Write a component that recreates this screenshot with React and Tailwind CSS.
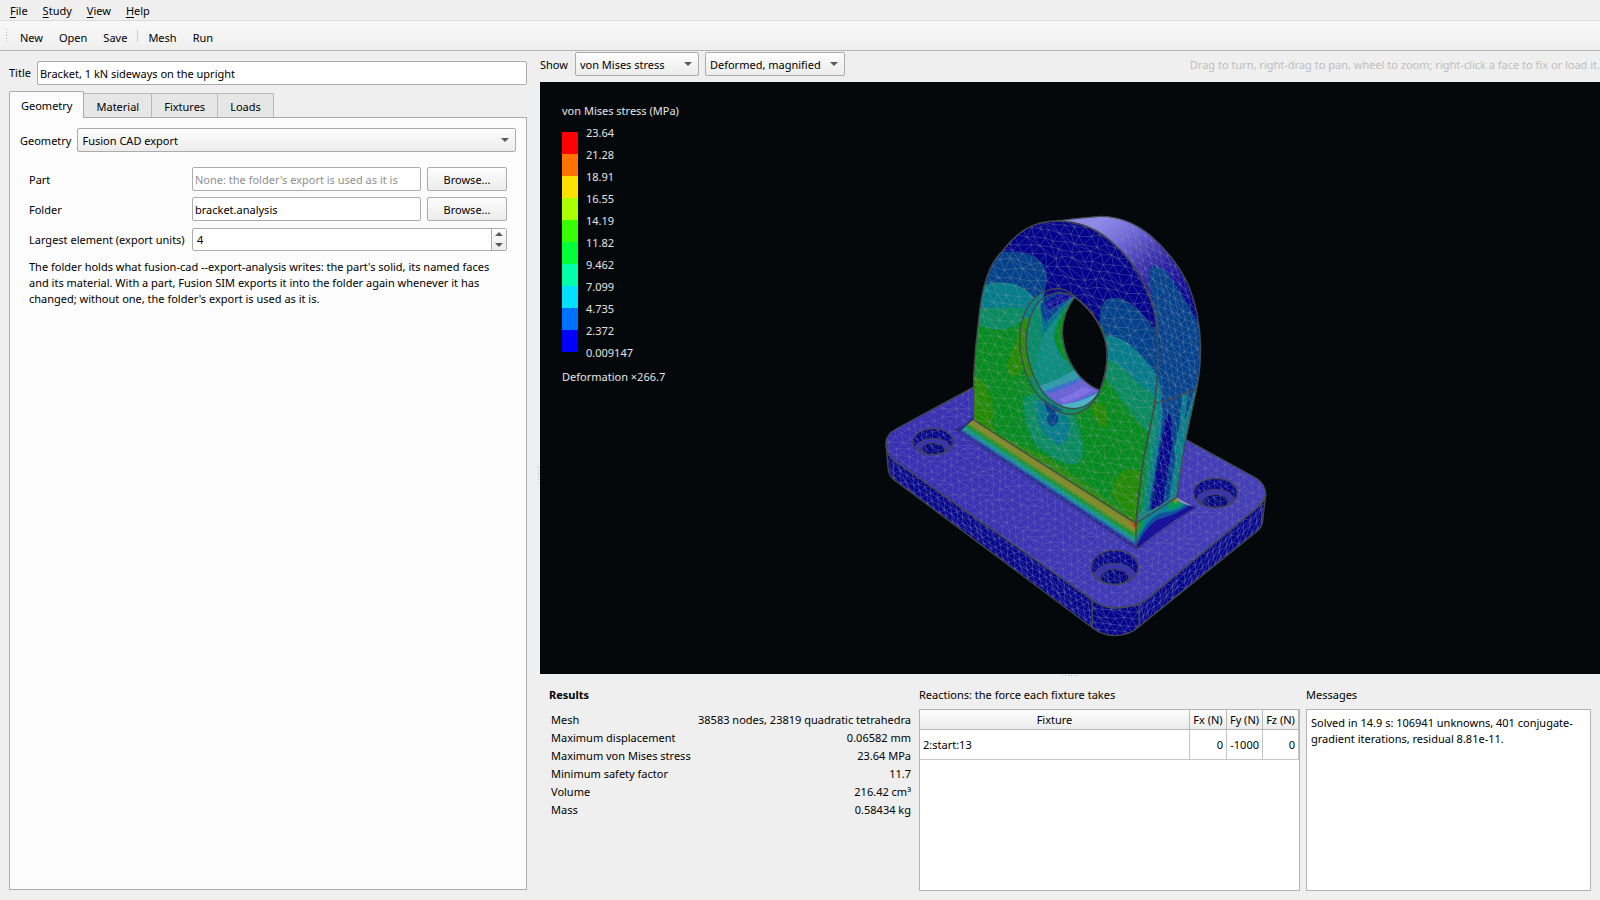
import React from 'react';

const menus = ['File', 'Study', 'View', 'Help'];

const results = [
  ['Mesh', '38583 nodes, 23819 quadratic tetrahedra'],
  ['Maximum displacement', '0.06582 mm'],
  ['Maximum von Mises stress', '23.64 MPa'],
  ['Minimum safety factor', '11.7'],
  ['Volume', '216.42 cm³'],
  ['Mass', '0.58434 kg'],
];

const legend = [
  { value: '23.64', color: 'bg-[#ff0000]' },
  { value: '21.28', color: 'bg-[#ff7300]' },
  { value: '18.91', color: 'bg-[#ffe100]' },
  { value: '16.55', color: 'bg-[#aaff00]' },
  { value: '14.19', color: 'bg-[#38ff00]' },
  { value: '11.82', color: 'bg-[#00ff38]' },
  { value: '9.462', color: 'bg-[#00ffaa]' },
  { value: '7.099', color: 'bg-[#00e1ff]' },
  { value: '4.735', color: 'bg-[#0071ff]' },
  { value: '2.372', color: 'bg-[#0000ff]' },
];

const field = 'h-6 min-w-0 rounded-xs border border-[#ababab] bg-white px-[2px] outline-none';
const raised = 'rounded-xs border border-[#ababab] bg-linear-to-b from-[#fdfdfd] to-[#ececec] pt-px';

const Arrow = ({ up = false, className = 'h-1 w-2' }) => (
  <svg viewBox="0 0 8 4" className={className} aria-hidden="true">
    <path d={up ? 'M0 4L4 0L8 4Z' : 'M0 0L8 0L4 4Z'} fill="#5a5a5a" />
  </svg>
);

const Select = ({ id, label, options, className }) => (
  <div className={`relative ${className}`}>
    <select
      id={id}
      aria-label={label}
      className={`h-6 w-full appearance-none pr-5 pl-1 outline-none ${raised}`}
    >
      {options.map((o) => (
        <option key={o}>{o}</option>
      ))}
    </select>
    <Arrow className="pointer-events-none absolute top-2.5 right-[7px] h-1 w-2" />
  </div>
);

// Small pseudo random offset that stays the same for a given lattice point
const noise = (i, j, k) => {
  const s = Math.sin(i * 127.1 + j * 311.7 + k * 74.7) * 43758.5453;
  return s - Math.floor(s) - 0.5;
};

// Triangle lattice over a box, spanned by the vectors u and v
const meshPath = ([x0, y0, x1, y1], u, v, jitter) => {
  const det = u[0] * v[1] - u[1] * v[0];
  const cx = (x0 + x1) / 2;
  const cy = (y0 + y1) / 2;
  const reach = Math.hypot(x1 - x0, y1 - y0) / 2;
  const nu = Math.ceil((reach * Math.hypot(v[0], v[1])) / Math.abs(det)) + 1;
  const nv = Math.ceil((reach * Math.hypot(u[0], u[1])) / Math.abs(det)) + 1;
  const point = (i, j) => [
    Math.round(cx + i * u[0] + j * v[0] + noise(i, j, 1) * jitter),
    Math.round(cy + i * u[1] + j * v[1] + noise(i, j, 2) * jitter),
  ];
  let d = '';
  for (let i = -nu; i <= nu; i++) {
    for (let j = -nv; j <= nv; j++) {
      const [px, py] = point(i, j);
      if (px < x0 - 40 || px > x1 + 40 || py < y0 - 40 || py > y1 + 40) continue;
      const a = point(i + 1, j);
      const b = point(i, j + 1);
      // flip some diagonals so the mesh doesn't look regular
      const flip = noise(i, j, 3) > 0.28;
      const c = point(i + 1, j + 1);
      d += `M${a}L${px} ${py}L${b}`;
      d += flip ? `M${px} ${py}L${c}` : `M${a}L${b}`;
    }
  }
  return d;
};

const shapes = {
  baseTop:
    'M78 762Q76 735 108 717L340 592L980 750L1188 864Q1219 884 1217 918Q1212 935 1195 950L868 1222Q840 1252 765 1254Q725 1252 697 1230L100 810Q80 792 78 762Z',
  baseLeft: 'M78 762Q80 792 100 810L697 1230V1313L106 872Q84 858 84 830Z',
  baseCorner: 'M697 1230Q725 1252 765 1254Q810 1252 838 1240V1309Q810 1336 765 1337Q725 1335 697 1313Z',
  baseRight: 'M838 1240Q858 1232 868 1222L1195 950Q1212 935 1217 915L1207 1000Q1204 1012 1192 1023L838 1309Z',
  foot: 'M341 688L828 1000L830 1076L560 898L300 724Z',
  front:
    'M341 690L341 560Q345 470 357 380Q362 330 372 290Q388 220 430 180Q495 93 590 93Q690 93 765 165Q850 245 880 355Q893 400 893 480L893 540Q890 610 880 665L852 800Q836 900 828 1000Z',
  side:
    'M590 93Q650 84 720 79Q800 78 870 135Q945 200 985 285Q1020 370 1022 470Q1022 540 1010 595Q990 690 977 750Q960 850 950 922L828 1000Q836 900 852 800L880 665Q890 610 893 540L893 480Q893 400 880 355Q850 245 765 165Q690 93 590 93Z',
  ring:
    'M645 320Q620 296 590 295Q540 300 510 340Q478 385 479 455Q484 545 530 610Q575 670 632 673Q690 668 720 600Q742 545 742 490Q735 390 645 320Z',
  bore:
    'M640 318Q620 308 595 308Q550 312 525 350Q498 400 498 460Q504 545 550 608Q590 656 645 656Q695 650 720 600Q742 545 742 490Q735 390 640 318Z',
  opening:
    'M645 320Q607 370 607 430Q612 505 662 562Q692 592 720 601Q742 550 742 490Q735 390 645 320Z',
};

const meshes = {
  top: meshPath([70, 580, 1220, 1260], [21, 14], [20, -13], 9),
  left: meshPath([70, 750, 700, 1320], [19, 14], [3, 21], 6),
  corner: meshPath([690, 1225, 845, 1340], [26, 2], [12, 22], 6),
  right: meshPath([830, 900, 1220, 1320], [18, -15], [2, 20], 6),
  front: meshPath([335, 90, 895, 1000], [30, 4], [14, 28], 14),
  side: meshPath([590, 75, 1025, 1000], [20, 10], [5, 26], 9),
  foot: meshPath([295, 685, 1010, 1085], [17, 11], [2, 13], 5),
  bore: meshPath([475, 290, 745, 675], [24, 10], [8, 28], 8),
};

const holes = [
  { cx: 219, cy: 755, rx: 61, ry: 39 },
  { cx: 1066, cy: 909, rx: 66, ry: 44 },
  { cx: 764, cy: 1132, rx: 71, ry: 51 },
];

const CounterBore = ({ cx, cy, rx, ry, id }) => (
  <g>
    <clipPath id={id}>
      <ellipse cx={cx} cy={cy} rx={rx} ry={ry} />
    </clipPath>
    <clipPath id={`${id}-floor`}>
      <ellipse cx={cx} cy={cy + ry * 0.58} rx={rx * 0.6} ry={ry * 0.48} />
    </clipPath>
    <g clipPath={`url(#${id})`}>
      <rect x={cx - rx} y={cy - ry} width={rx * 2} height={ry * 2} fill="#02028a" />
      <path d={meshes.left} stroke="#6e78b4" strokeOpacity="0.6" transform={`translate(${cx - 380} ${cy - 1020})`} />
      <ellipse cx={cx} cy={cy + ry * 0.66} rx={rx * 0.92} ry={ry * 0.9} fill="#3a34ae" stroke="#45474f" strokeWidth="3" />
      <g clipPath={`url(#${id}-floor)`}>
        <rect x={cx - rx} y={cy - ry} width={rx * 2} height={ry * 2.2} fill="#02027c" />
        <path d={meshes.left} stroke="#6e78b4" strokeOpacity="0.6" transform={`translate(${cx - 384} ${cy - 1000})`} />
      </g>
      <ellipse cx={cx} cy={cy + ry * 0.58} rx={rx * 0.6} ry={ry * 0.48} stroke="#45474f" strokeWidth="3" />
    </g>
    <ellipse cx={cx} cy={cy} rx={rx} ry={ry} stroke="#45474f" strokeWidth="4" />
  </g>
);

const StressModel = () => (
  <svg
    viewBox="-960 -324 3180 1776"
    className="absolute inset-0 h-full w-full"
    role="img"
    aria-label="Bracket coloured by von Mises stress"
    fill="none"
    strokeWidth="2"
  >
    <defs>
      {Object.entries(shapes).map(([name, d]) => (
        <clipPath key={name} id={`clip-${name}`}>
          <path d={d} />
        </clipPath>
      ))}
      <linearGradient id="rim" gradientUnits="userSpaceOnUse" x1="740" y1="80" x2="960" y2="370">
        <stop offset="0" stopColor="#8f88ee" />
        <stop offset="0.22" stopColor="#7169de" />
        <stop offset="0.5" stopColor="#3a2fae" />
        <stop offset="0.8" stopColor="#140c9a" />
        <stop offset="1" stopColor="#02028c" />
      </linearGradient>
      <linearGradient id="plate" gradientUnits="userSpaceOnUse" x1="100" y1="800" x2="1150" y2="900">
        <stop offset="0" stopColor="#372eb4" />
        <stop offset="1" stopColor="#433db9" />
      </linearGradient>
      {/* Stress falls off across the fillet, from the upright outwards */}
      <linearGradient id="fillet" gradientUnits="userSpaceOnUse" x1="584" y1="845" x2="552" y2="894">
        <stop offset="0" stopColor="#5f8a10" />
        <stop offset="0.1" stopColor="#828a1c" />
        <stop offset="0.3" stopColor="#868c22" />
        <stop offset="0.38" stopColor="#4b931b" />
        <stop offset="0.5" stopColor="#14932a" />
        <stop offset="0.58" stopColor="#0b9a6c" />
        <stop offset="0.68" stopColor="#0b9a80" />
        <stop offset="0.74" stopColor="#148ba8" />
        <stop offset="0.84" stopColor="#1c56a8" />
        <stop offset="0.94" stopColor="#1d1d9a" />
        <stop offset="1" stopColor="#20189c" />
      </linearGradient>
      <linearGradient id="strips" gradientUnits="userSpaceOnUse" x1="848" y1="800" x2="974" y2="820">
        <stop offset="0" stopColor="#058c2a" />
        <stop offset="0.1" stopColor="#078b5f" />
        <stop offset="0.2" stopColor="#078b6e" />
        <stop offset="0.24" stopColor="#047c8b" />
        <stop offset="0.32" stopColor="#047c8b" />
        <stop offset="0.35" stopColor="#03418c" />
        <stop offset="0.44" stopColor="#03418c" />
        <stop offset="0.47" stopColor="#02028c" />
        <stop offset="0.62" stopColor="#02028c" />
        <stop offset="0.65" stopColor="#03418c" />
        <stop offset="0.75" stopColor="#03418c" />
        <stop offset="0.78" stopColor="#047c8b" />
        <stop offset="0.88" stopColor="#078b78" />
        <stop offset="1" stopColor="#0a8b4c" />
      </linearGradient>
    </defs>

    {/* Base plate */}
    <path d={shapes.baseTop} fill="url(#plate)" />
    <g clipPath="url(#clip-baseTop)">
      <path d={meshes.top} stroke="#8a90a8" strokeOpacity="0.4" />
    </g>
    {['Left', 'Corner', 'Right'].map((part) => (
      <g key={part} clipPath={`url(#clip-base${part})`}>
        <path d={shapes[`base${part}`]} fill="#02028a" />
        <path d={meshes[part.toLowerCase()]} stroke="#7a84b8" strokeOpacity="0.62" />
      </g>
    ))}
    <g stroke="#45474f" strokeWidth="4">
      <path d={shapes.baseTop} />
      <path d={shapes.baseLeft} />
      <path d={shapes.baseCorner} />
      <path d={shapes.baseRight} />
      <path d="M100 812V866M1205 940V1004" />
    </g>
    {holes.map((h, i) => (
      <CounterBore key={h.cx} id={`bore-${i}`} {...h} />
    ))}

    {/* Fillet round the foot */}
    <path d="M284 718Q325 708 341 672V700L308 730Z" fill="#2a239c" />
    <path d="M828 1000L950 922L1006 952Q920 1002 830 1076Z" fill="#18129a" />
    <path d="M828 1000L950 922L988 946Q950 974 890 990Q856 1014 830 1066Z" fill="#12509c" />
    <path d="M828 1000L950 922L976 944Q950 968 905 968Q860 985 830 1056Z" fill="#0b8296" />
    <path d="M925 940L950 922L970 940Q950 958 925 958Z" fill="#0b9a5a" />
    <path d="M938 930L950 922L958 932L946 942Z" fill="#7a9420" />
    <path d="M828 1000L862 980Q852 1010 829 1046Z" fill="#0a936c" />
    <path d="M828 1000L842 991Q844 1012 829 1034Z" fill="#2a931b" />
    <path d="M950 920L1006 950Q968 946 950 928Z" fill="#8d88d8" />
    <path d={shapes.foot} fill="url(#fillet)" />
    <g clipPath="url(#clip-foot)">
      <path d={meshes.foot} stroke="#8f98a4" strokeOpacity="0.3" />
    </g>
    <path d="M794 980L828 1002L832 1018L822 1014Z" fill="#a8701c" />
    <circle cx="827" cy="1004" r="6" fill="#b03a18" />
    <path d="M284 718Q325 708 341 672M284 718L560 898L830 1078L1008 952L950 920" stroke="#34366a" strokeWidth="3" />

    {/* Outer rim of the upright */}
    <path d={shapes.side} fill="url(#rim)" />
    <g clipPath="url(#clip-side)">
      <path
        d="M893 480Q893 400 880 340Q862 260 868 238Q884 214 920 245Q965 305 1010 392H1030V600L985 720L950 930L820 1010L870 690Z"
        fill="#03418c"
      />
      <path d="M868 640L905 610L908 740L1000 660L977 750L950 930L820 1010L852 800Z" fill="url(#strips)" />
      <path d="M893 555L905 605Q906 680 892 780L862 980L820 1010L852 800Z" fill="#047c8b" />
      <path d="M893 590Q900 680 876 800L855 985L820 1010L852 800Z" fill="#078b68" />
      <path d="M868 720Q862 840 842 990L826 1002L850 800Z" fill="#058b30" />
      <path d="M1015 560L1004 600Q972 690 958 790L935 935L955 925L1030 600Z" fill="#047c8b" />
      <path d="M1012 580Q984 690 968 790L944 930L960 925L1030 600Z" fill="#078b60" />
      <path d="M905 610L965 612Q970 700 945 770L930 740Q935 690 927 670L908 740Z" fill="#03418c" />
      <path d="M927 670Q938 690 934 740L900 955L872 970Q890 820 916 690Z" fill="#02028c" />
      <path d="M965 612L985 606Q975 700 948 800L940 780Q965 700 965 612Z" fill="#047c8b" />
      <path d="M828 1000L862 978L935 934L950 922L952 905Q900 952 866 962Q850 967 836 974Z" fill="#1a7e80" />
      <path d={meshes.side} stroke="#8f98ac" strokeOpacity="0.48" />
    </g>

    {/* Front face with its contour bands */}
    <path d={shapes.front} fill="#058b1e" />
    <g clipPath="url(#clip-front)">
      <path d="M330 555Q372 565 384 600Q408 650 396 700L420 745L330 700Z" fill="#238b03" />
      <path d="M480 415Q508 400 505 450Q498 520 480 548Q455 575 444 545Q440 500 462 470Z" fill="#238b03" />
      <path d="M692 640L735 640Q748 690 738 715Q715 712 692 660Z" fill="#238b03" />
      <path d="M755 915Q762 870 775 855Q805 825 850 848L835 1010Z" fill="#238b03" />
      <path d="M340 686L420 736L560 800L700 896L828 990V1010Z" fill="#4d8b08" fillOpacity="0.5" />
      <path d="M330 345L500 350L560 340V420L500 385Q450 425 400 418Q370 412 330 395Z" fill="#078b5f" />
      <path d="M330 300Q400 270 450 276Q510 290 550 345Q510 362 470 352L330 355Z" fill="#047c8b" />
      <path d="M360 285Q430 270 470 284Q510 302 530 332L600 300L570 200L420 160Z" fill="#03418c" />
      <path
        d="M410 186Q510 180 535 210Q562 232 562 262L552 305L560 360L722 440L722 382Q722 342 742 328Q765 316 800 334Q845 360 875 411L900 410V200L700 80H480Z"
        fill="#02028c"
      />
      <path d="M718 384Q722 342 742 328Q765 316 800 334Q845 360 875 411L900 412V570L830 520L740 450Z" fill="#03418c" />
      <path d="M730 437Q780 432 830 482Q880 532 900 570V640L780 530L735 520Z" fill="#047c8b" />
      <path d="M738 505Q760 510 800 548Q860 600 900 630L880 740Q830 700 735 560Z" fill="#078b5f" />
      <path d="M492 620Q488 700 520 755Q570 812 640 825Q672 815 670 775Q664 720 640 670L560 600Z" fill="#078b5f" />
      <path d="M528 630Q524 700 560 740Q590 768 608 764Q632 745 628 700Q622 670 580 650Z" fill="#047c8b" />
      <ellipse cx="578" cy="686" rx="17" ry="22" fill="#03418c" />
      <path d="M552 636L590 660L575 670L560 664Z" fill="#03418c" />
      <path d={meshes.front} stroke="#98a0a4" strokeOpacity="0.45" />
    </g>

    {/* Bore */}
    <path d={shapes.ring} fill="#078b48" />
    <g clipPath="url(#clip-ring)">
      <path d="M560 280L660 290V330L540 330Z" fill="#02028c" />
      <path d="M560 290L490 370L500 400L550 320Z" fill="#047c8b" />
      <path d="M470 400L510 380V540L540 600L500 600Z" fill="#2a8b08" />
      <path d="M500 560L740 560V700H560Z" fill="#078b5f" />
      <path d="M545 625L610 660L580 672Z" fill="#03568c" />
    </g>
    <g clipPath="url(#clip-bore)">
      <path d={shapes.bore} fill="#078b68" />
      <path d="M520 340Q560 360 560 420Q530 470 525 560L570 620L640 570L590 460L600 360L645 320Z" fill="#0b8d80" />
      <path d="M540 340L645 318L575 400L548 440Z" fill="#04728c" />
      <path d="M542 352L560 305L645 316L600 350L560 398Q545 385 542 352Z" fill="#053c94" />
      <path d="M552 340L600 310L640 318L590 346L570 360Z" fill="#0c0c98" />
      <path d="M645 320Q590 380 582 440Q588 490 630 520L660 560L610 430Z" fill="#078c20" />
      <path d="M530 590Q600 570 650 535L730 610L640 670L570 640Z" fill="#2f9aaa" />
      <path d="M548 606Q620 578 664 562L720 600L690 640L640 660L590 640Z" fill="#3a6fcf" />
      <path d="M560 612Q610 600 670 568L722 600Q680 620 640 640L600 642Z" fill="#6a62d8" />
      <path d="M596 628Q640 612 668 590L700 600Q660 622 612 640Z" fill="#7f70ea" />
      <path d="M600 644Q660 640 718 606L700 650L640 662Z" fill="#46b6c4" />
      <path
        d="M640 320L548 352M640 322L552 372M640 324L560 395M620 312L560 345M600 310L590 350M570 326L580 362"
        stroke="#6e78b4"
        strokeOpacity="0.5"
      />
    </g>
    <g clipPath="url(#clip-ring)">
      <path d={meshes.bore} stroke="#98a0a8" strokeOpacity="0.28" />
    </g>
    <path d={shapes.opening} fill="#04080a" />
    <g stroke="#45474f" strokeWidth="4">
      <path d={shapes.ring} />
      <path d={shapes.bore} />
      <path d={shapes.opening} />
      <path d={shapes.front} />
      <path d={shapes.side} />
      <path d="M882 640L950 622L1008 598M828 1000V1078" />
    </g>
  </svg>
);

const Legend = () => (
  <div className="relative px-[22px] pt-[21px] text-[#e4e4e4]">
    <p>von Mises stress (MPa)</p>
    <div className="mt-[13px] flex gap-2">
      <div className="w-4">
        {legend.map((step) => (
          <div key={step.value} className={`h-[22px] ${step.color}`} />
        ))}
      </div>
      <ul className="-mt-2.5">
        {[...legend, { value: '0.009147' }].map((step) => (
          <li key={step.value} className="h-[22px] leading-[22px]">
            {step.value}
          </li>
        ))}
      </ul>
    </div>
    <p className="mt-[5px]">Deformation ×266.7</p>
  </div>
);

const tabs = ['Geometry', 'Material', 'Fixtures', 'Loads'];

const StudyPanel = () => (
  <section className="flex w-[33%] shrink-0 flex-col pt-2.5 pr-px pb-2.5 pl-[9px]">
    <div className="flex items-center gap-1.5">
      <label htmlFor="title">Title</label>
      <input id="title" className={`${field} flex-1`} defaultValue="Bracket, 1 kN sideways on the upright" />
    </div>
    <div role="tablist" className="mt-1.5 flex items-end">
      {tabs.map((tab, i) => (
        <button
          key={tab}
          role="tab"
          aria-selected={i === 0}
          className={
            i === 0
              ? 'relative z-10 -mb-px h-[27px] rounded-t-xs border border-b-0 border-[#ababab] bg-[#fcfcfc] px-[11px] pt-0.5'
              : 'h-6 border border-b-0 border-l-0 border-[#b9b9b9] bg-[#e6e6e6] px-3 pt-0.5'
          }
        >
          {tab}
        </button>
      ))}
    </div>
    <div role="tabpanel" className="flex-1 border border-[#ababab] bg-[#fcfcfc] p-2.5">
      <div className="flex items-center gap-1.5">
        <label htmlFor="geometry" className="pt-0.5">
          Geometry
        </label>
        <Select id="geometry" options={['Fusion CAD export']} className="flex-1" />
      </div>
      <div className="mt-[15px] grid grid-cols-[157px_1fr_80px] items-center gap-x-1.5 gap-y-1.5 px-[9px]">
        <label htmlFor="part" className="pt-px">
          Part
        </label>
        <input
          id="part"
          className={`${field} placeholder:text-[#8f8f8f]`}
          placeholder="None: the folder's export is used as it is"
        />
        <button className={`h-6 ${raised}`}>Browse...</button>
        <label htmlFor="folder" className="pt-px">
          Folder
        </label>
        <input id="folder" className={field} defaultValue="bracket.analysis" />
        <button className={`h-6 ${raised}`}>Browse...</button>
        <label htmlFor="largest" className="pt-0.5 whitespace-nowrap">
          Largest element (export units)
        </label>
        <div className="col-span-2 mt-px flex h-[23px] overflow-hidden rounded-xs border border-[#ababab] bg-white">
          <input id="largest" inputMode="numeric" className="min-w-0 flex-1 px-1 pt-px outline-none" defaultValue="4" />
          <div className="flex w-[15px] flex-col border-l border-[#ababab] bg-linear-to-b from-[#fdfdfd] to-[#ececec]">
            <button aria-label="Increase" className="flex flex-1 items-center justify-center">
              <Arrow up />
            </button>
            <button aria-label="Decrease" className="flex flex-1 items-center justify-center">
              <Arrow />
            </button>
          </div>
        </div>
      </div>
      <p className="mt-2 px-[9px] leading-4">
        The folder holds what fusion-cad --export-analysis writes: the part's solid, its named faces and its material.
        With a part, Fusion SIM exports it into the folder again whenever it has changed; without one, the folder's
        export is used as it is.
      </p>
    </div>
  </section>
);

const head = 'border-r border-b border-[#b9b9b9] bg-linear-to-b from-[#fdfdfd] to-[#ececec] pt-px font-normal';
const cell = 'border-r border-b border-[#c6c6c6] px-[3px]';

const Report = () => (
  <div className="grid h-[215px] shrink-0 grid-cols-[364fr_381fr_285fr] gap-1.5 px-[9px] pt-0.5 pb-[9px]">
    <section>
      <h2 className="font-bold">Results</h2>
      <dl className="mt-2 px-0.5">
        {results.map(([name, value]) => (
          <div key={name} className="flex justify-between leading-[18px]">
            <dt>{name}</dt>
            <dd>{value}</dd>
          </div>
        ))}
      </dl>
    </section>
    <section className="flex flex-col">
      <h2>Reactions: the force each fixture takes</h2>
      <div className="mt-1.5 flex-1 border border-[#b4b4b4] bg-white">
        <table className="w-full table-fixed border-separate border-spacing-0">
          <thead>
            <tr className="h-5">
              <th className={head}>Fixture</th>
              <th className={`${head} w-[37px]`}>Fx (N)</th>
              <th className={`${head} w-9`}>Fy (N)</th>
              <th className={`${head} w-9`}>Fz (N)</th>
            </tr>
          </thead>
          <tbody>
            <tr className="h-[30px]">
              <td className={cell}>2:start:13</td>
              <td className={`${cell} text-right`}>0</td>
              <td className={`${cell} text-right`}>-1000</td>
              <td className={`${cell} text-right`}>0</td>
            </tr>
          </tbody>
        </table>
      </div>
    </section>
    <section className="flex flex-col">
      <label htmlFor="messages">Messages</label>
      <textarea
        id="messages"
        readOnly
        className="mt-1.5 flex-1 resize-none border border-[#b4b4b4] bg-white px-1 py-[5px] leading-4 outline-none"
        defaultValue="Solved in 14.9 s: 106941 unknowns, 401 conjugate-gradient iterations, residual 8.81e-11."
      />
    </section>
  </div>
);

export default function App() {
  return (
    <div className="flex h-screen flex-col overflow-hidden bg-[#efefef] font-['Noto_Sans',sans-serif] text-[11px] leading-4 text-black">
      <nav className="flex h-[21px] shrink-0 items-center gap-[15px] border-b border-[#dadada] px-2.5 pt-0.5">
        {menus.map((name) => (
          <button key={name}>
            <span className="underline underline-offset-2">{name[0]}</span>
            {name.slice(1)}
          </button>
        ))}
      </nav>

      <div className="flex h-[30px] shrink-0 items-center border-b border-[#b4b4b4] bg-linear-to-b from-[#f8f8f8] to-[#efefef] pl-[5px]">
        <div className="mr-[11px] h-4 w-1 bg-[radial-gradient(#b4b4b4_1px,transparent_1px)] bg-size-[3px_3px]" />
        <div className="flex gap-4 pt-1">
          <button>New</button>
          <button>Open</button>
          <button>Save</button>
        </div>
        <div className="mr-2.5 ml-2.5 h-3 w-px bg-[#cfcfcf]" />
        <div className="flex gap-4 pt-1">
          <button>Mesh</button>
          <button>Run</button>
        </div>
      </div>

      <main className="flex min-h-0 flex-1">
        <StudyPanel />
        <div className="flex w-3 shrink-0 items-center justify-end pr-px">
          <div className="h-[18px] w-px bg-[repeating-linear-gradient(#b4b4b4_0_1px,transparent_1px_3px)]" />
        </div>
        <section className="flex min-w-0 flex-1 flex-col">
          <div className="flex h-[31px] shrink-0 items-start gap-1.5 pt-px">
            <span className="pr-px leading-[26px]">Show</span>
            <Select label="Quantity" options={['von Mises stress']} className="w-[124px]" />
            <Select label="Shape" options={['Deformed, magnified']} className="w-[140px]" />
            <p className="flex-1 text-right leading-[26px] whitespace-nowrap text-[#bebebe]">
              Drag to turn, right-drag to pan, wheel to zoom; right-click a face to fix or load it.
            </p>
          </div>
          <div className="relative min-h-0 flex-1 bg-[#04080a]">
            <StressModel />
            <Legend />
          </div>
          <div className="flex h-[11px] shrink-0 justify-center pt-px">
            <div className="h-px w-4 bg-[repeating-linear-gradient(90deg,#b4b4b4_0_1px,transparent_1px_3px)]" />
          </div>
          <Report />
        </section>
      </main>
    </div>
  );
}
